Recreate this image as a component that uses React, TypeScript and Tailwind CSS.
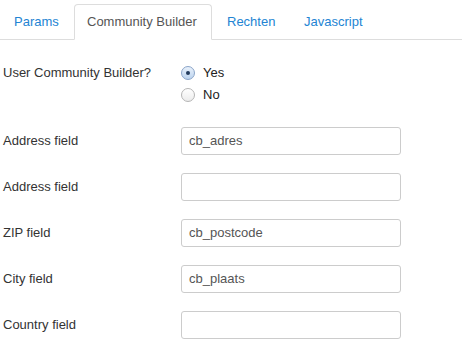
import React from "react";

function Radio({ checked }: { checked?: boolean }) {
  return (
    <span
      className={
        "inline-flex h-[14px] w-[14px] items-center justify-center rounded-full border " +
        (checked
          ? "border-[#8aa4c8] bg-[linear-gradient(#e9f1fb,#bcd3ee)]"
          : "border-[#b5b5b5] bg-[linear-gradient(#ffffff,#ececec)]")
      }
    >
      {checked && <span className="h-[4px] w-[4px] rounded-full bg-[#223a5c]" />}
    </span>
  );
}

function Field({ label, value }: { label: string; value: string }) {
  return (
    <div className="flex items-center">
      <div className="w-[181px] pl-[3px]">{label}</div>
      <div className="flex h-[28px] w-[220px] items-center rounded-[3px] border border-[#cccccc] bg-white px-[7px] text-[#555]">
        {value}
      </div>
    </div>
  );
}

export default function App() {
  return (
    <div
      className="h-[351px] w-[462px] bg-white text-[13px] text-[#333] leading-[18px]"
      style={{ fontFamily: '"Liberation Sans", Arial, sans-serif' }}
    >
      <div className="flex h-[40px] items-end border-b border-[#dddddd] pl-[2px]">
        <div className="mr-[2px] flex h-[35px] w-[70px] items-center pl-[12px] text-[#2384d3]">
          Params
        </div>
        <div className="-mb-px mr-[2px] flex h-[36px] w-[138px] items-center rounded-t-[4px] border border-b-white border-[#dddddd] bg-white pl-[12px] text-[#555]">
          Community Builder
        </div>
        <div className="mr-[2px] flex h-[35px] w-[76px] items-center pl-[13px] text-[#2384d3]">
          Rechten
        </div>
        <div className="flex h-[35px] items-center px-[12px] text-[#2384d3]">
          Javascript
        </div>
      </div>
      <div className="flex flex-col">
        <div className="mt-[24px] flex">
          <div className="w-[181px] pl-[3px]">User Community Builder?</div>
          <div className="-mt-[2px] flex flex-col">
            <label className="flex h-[22px] items-center gap-[8px]">
              <Radio checked />
              <span className="text-[#222]">Yes</span>
            </label>
            <label className="flex h-[22px] items-center gap-[8px]">
              <Radio />
              <span className="text-[#222]">No</span>
            </label>
          </div>
        </div>
        <div className="mt-[21px] flex flex-col gap-[18px]">
          <Field label="Address field" value="cb_adres" />
          <Field label="Address field" value="" />
          <Field label="ZIP field" value="cb_postcode" />
          <Field label="City field" value="cb_plaats" />
          <Field label="Country field" value="" />
        </div>
      </div>
    </div>
  );
}
